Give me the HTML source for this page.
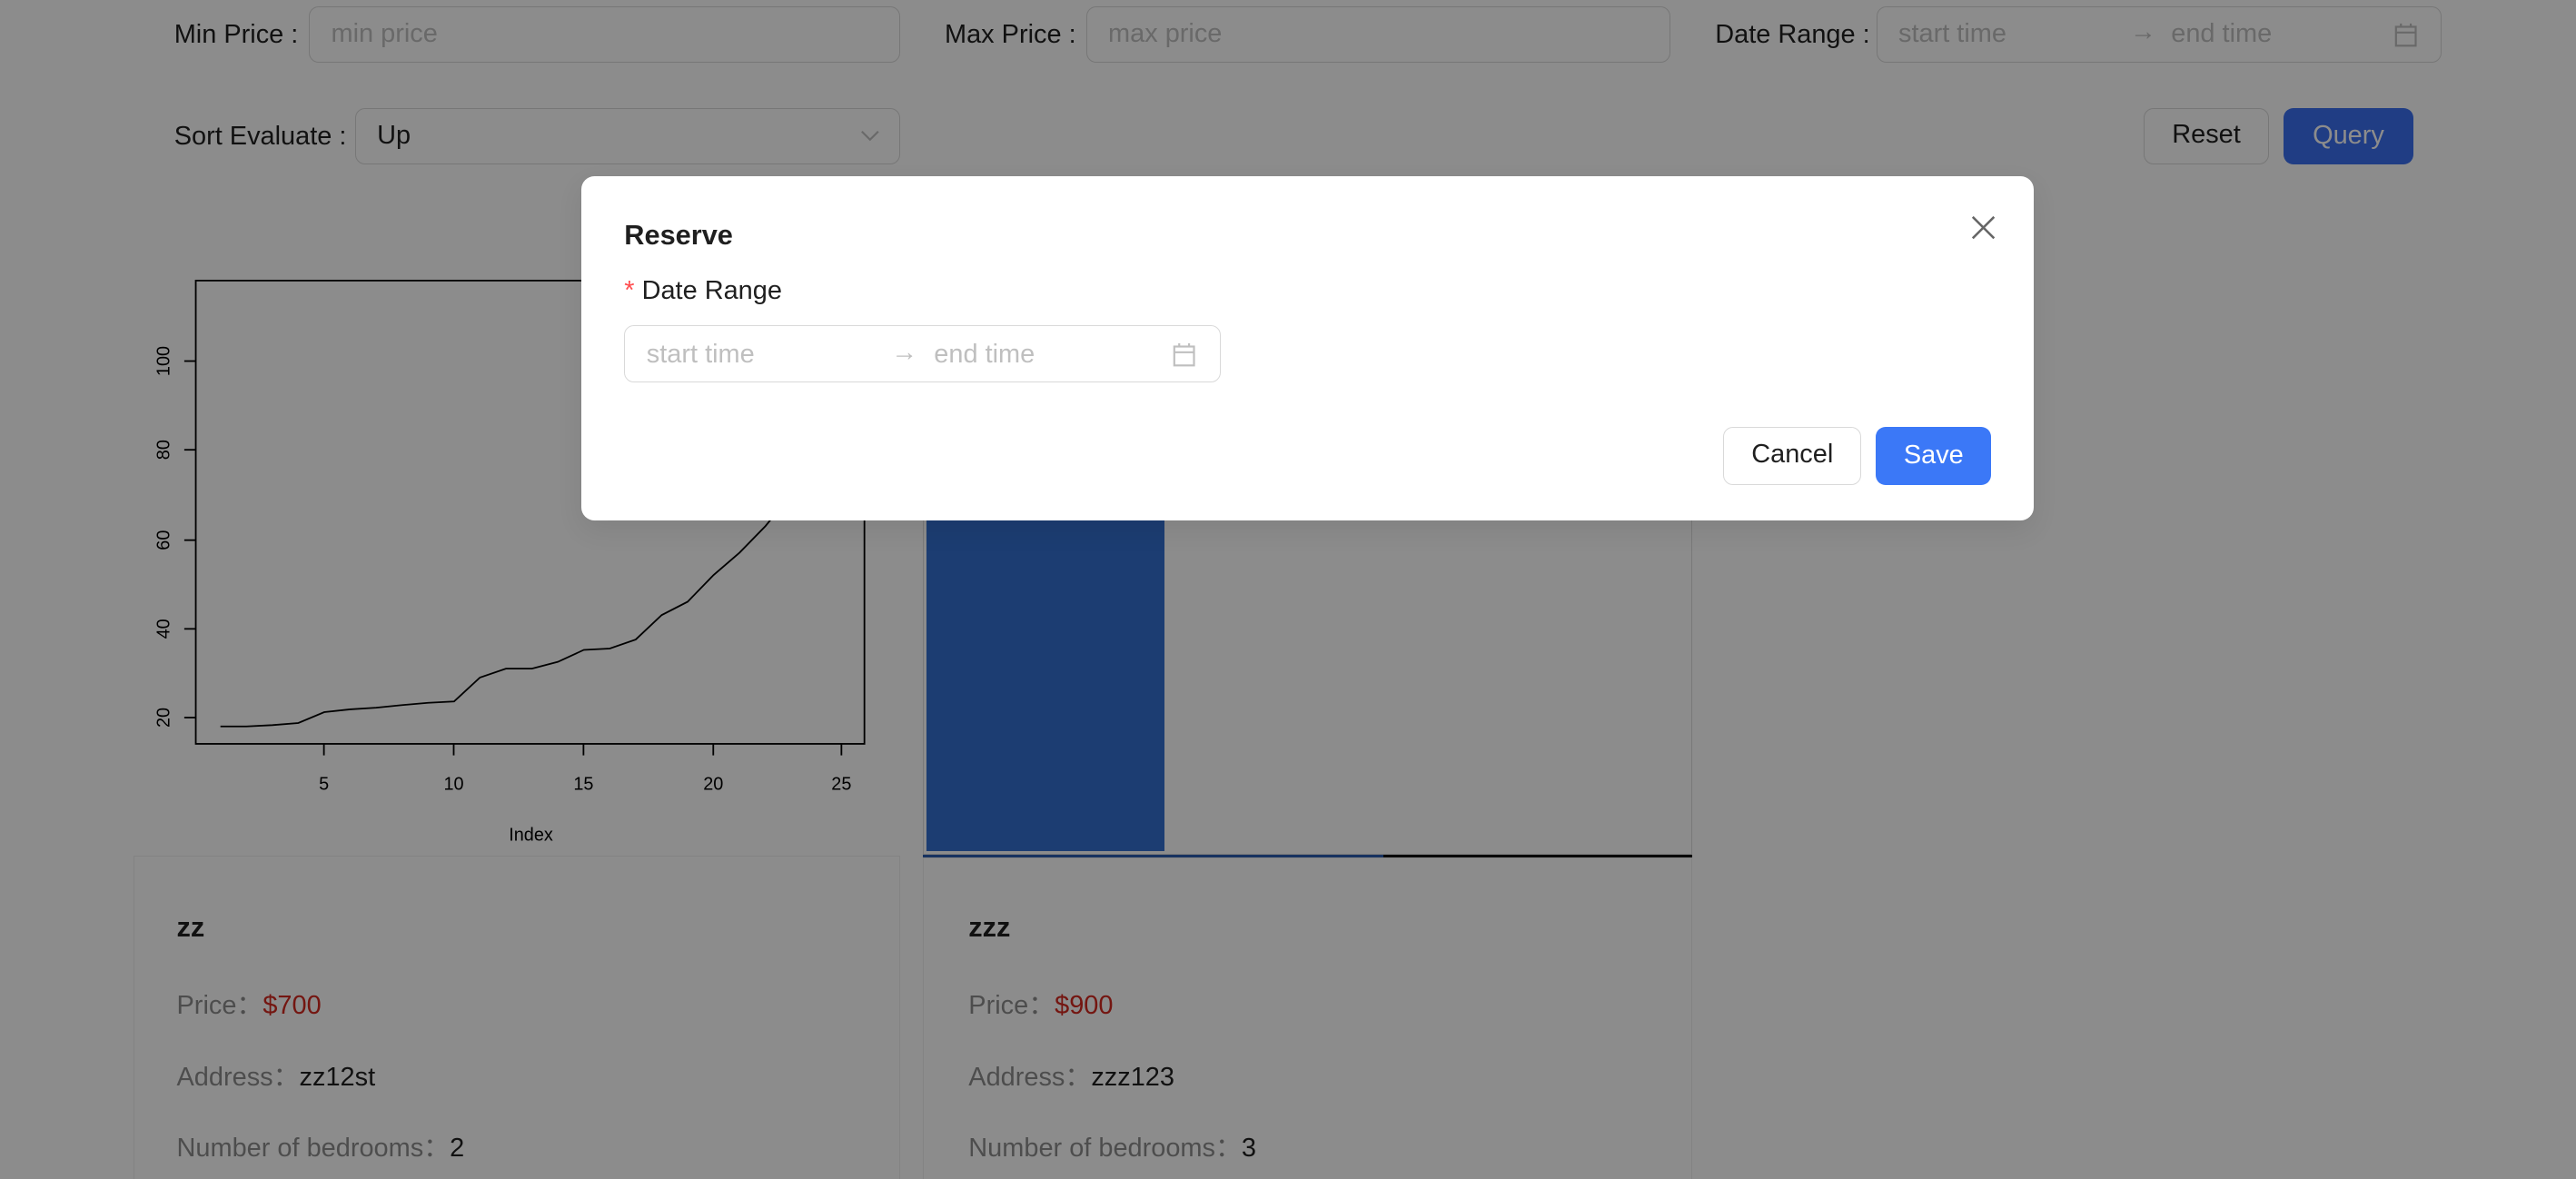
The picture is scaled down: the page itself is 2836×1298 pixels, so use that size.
<!DOCTYPE html>
<html><head><meta charset="utf-8"><style>
html,body{margin:0;padding:0;width:2836px;height:1298px;overflow:hidden;background:#fff}
#w{zoom:1.80867;width:1568px;height:718px;position:relative;font-family:"Liberation Sans",sans-serif;color:rgba(0,0,0,.88);font-size:16px}
.a{position:absolute}
.inp{position:absolute;border:1px solid #d9d9d9;border-radius:6px;box-sizing:border-box;background:#fff}
.ph{color:#bfbfbf}
.lbl{position:absolute;font-size:16px;line-height:20px}
.btn{position:absolute;border-radius:6px;box-sizing:border-box;text-align:center;font-size:16px}
.card{position:absolute;border:1px solid #eee;background:#fff;box-sizing:border-box}
.k{color:rgba(0,0,0,.45)}
#ov{position:absolute;left:0;top:0;width:1568px;height:718px;background:rgba(0,0,0,.45)}
</style></head><body><div id="w">
<div class="lbl" style="left:106px;top:11px">Min Price :</div>
<div class="inp" style="left:188px;top:4px;width:360px;height:34px"><span class="ph a" style="left:13px;top:7px">min price</span></div>
<div class="lbl" style="left:575px;top:11px">Max Price :</div>
<div class="inp" style="left:661px;top:4px;width:356px;height:34px"><span class="ph a" style="left:13px;top:7px">max price</span></div>
<div class="lbl" style="left:1044px;top:11px">Date Range :</div>
<div class="inp" style="left:1142px;top:4px;width:344px;height:34px"><span class="ph a" style="left:13px;top:7px">start time</span><span class="ph a" style="left:154px;top:6px">→</span><span class="ph a" style="left:179px;top:7px">end time</span>
<svg class="a" style="left:315px;top:9px" width="14" height="15" viewBox="0 0 14 15" fill="none" stroke="#bfbfbf" stroke-width="1.2"><rect x="1" y="2.5" width="12" height="11.5"/><line x1="1" y1="6" x2="13" y2="6"/><line x1="4" y1="0.5" x2="4" y2="3"/><line x1="10" y1="0.5" x2="10" y2="3"/></svg></div>
<div class="lbl" style="left:106px;top:73px">Sort Evaluate :</div>
<div class="inp" style="left:216px;top:66px;width:332px;height:34px"><span class="a" style="left:13px;top:7px">Up</span>
<svg class="a" style="left:307px;top:12px" width="12" height="8" viewBox="0 0 12 8" fill="none" stroke="#bfbfbf" stroke-width="1.2"><path d="M1 1.5 L6 6.5 L11 1.5"/></svg></div>
<div class="btn" style="left:1305px;top:66px;width:76px;height:34px;border:1px solid #d9d9d9;line-height:32px;background:#fff">Reset</div>
<div class="btn" style="left:1390px;top:66px;width:79px;height:34px;background:#3b6ff0;color:#fff;line-height:34px">Query</div>

<svg class="a" style="left:80px;top:160px" width="460" height="365">
<rect x="39" y="11" width="407" height="282" fill="none" stroke="#000" stroke-width="1"/>
<g stroke="#000"><line x1="117" y1="293" x2="117" y2="300"/><line x1="196" y1="293" x2="196" y2="300"/><line x1="275" y1="293" x2="275" y2="300"/><line x1="354" y1="293" x2="354" y2="300"/><line x1="432" y1="293" x2="432" y2="300"/>
<line x1="32" y1="277" x2="39" y2="277"/><line x1="32" y1="223" x2="39" y2="223"/><line x1="32" y1="169" x2="39" y2="169"/><line x1="32" y1="114" x2="39" y2="114"/><line x1="32" y1="60" x2="39" y2="60"/></g>
<g font-family="Liberation Sans" font-size="11" text-anchor="middle" fill="#000"><text x="117" y="321">5</text><text x="196" y="321">10</text><text x="275" y="321">15</text><text x="354" y="321">20</text><text x="432" y="321">25</text><text x="243" y="352">Index</text>
<text transform="translate(23,277) rotate(-90)">20</text><text transform="translate(23,223) rotate(-90)">40</text><text transform="translate(23,169) rotate(-90)">60</text><text transform="translate(23,114) rotate(-90)">80</text><text transform="translate(23,60) rotate(-90)">100</text></g>
<polyline fill="none" stroke="#000" stroke-width="1" transform="translate(-80,-160)" points="134,442.4 149.8,442.4 165.6,441.6 181.4,440.3 197.2,433.7 213,432 228.8,431 244.6,429.4 260.4,428 276.2,427.2 292,412.6 307.8,407.2 323.6,407.2 339.4,403.1 355.2,395.8 371,395 386.8,389.5 402.6,374.6 418.4,366.5 434.2,350.2 450,336.6 465.8,320.4 481.6,301 497.4,270 513,230"/>
</svg>

<div class="a" style="left:562px;top:150px;width:468px;height:370px;border:1px solid #ddd;box-sizing:border-box;background:#fff"></div>
<div class="a" style="left:564px;top:150px;width:145px;height:368px;background:#3470d0"></div>
<div class="a" style="left:562px;top:520px;width:468px;height:2px;background:#111"></div>
<div class="a" style="left:562px;top:520px;width:280px;height:2px;background:#2a5cb0"></div>

<div class="card" style="left:81px;top:521px;width:467px;height:220px">
<div class="a" style="left:26px;top:33px;font-weight:bold;font-size:17px">zz</div>
<div class="a" style="left:26px;top:77px"><span class="k">Price：</span><span style="color:#d4281f">$700</span></div>
<div class="a" style="left:26px;top:121px"><span class="k">Address：</span>zz12st</div>
<div class="a" style="left:26px;top:164px"><span class="k">Number of bedrooms：</span>2</div></div>
<div class="card" style="left:562px;top:522px;width:468px;height:220px">
<div class="a" style="left:27px;top:32px;font-weight:bold;font-size:17px">zzz</div>
<div class="a" style="left:27px;top:76px"><span class="k">Price：</span><span style="color:#d4281f">$900</span></div>
<div class="a" style="left:27px;top:120px"><span class="k">Address：</span>zzz123</div>
<div class="a" style="left:27px;top:163px"><span class="k">Number of bedrooms：</span>3</div></div>

<div id="ov"></div>

<div class="a" style="left:354px;top:107px;width:884px;height:210px;background:#fff;border-radius:8px;box-shadow:0 6px 16px rgba(0,0,0,.08)">
<div class="a" style="left:26px;top:26px;font-weight:bold;font-size:17px">Reserve</div>
<svg class="a" style="left:846px;top:24px" width="15" height="15" viewBox="0 0 15 15" stroke="#666" stroke-width="1.4"><path d="M1 1 L14 14 M14 1 L1 14"/></svg>
<div class="a" style="left:26px;top:61px"><span style="color:#ff4d4f">*</span> Date Range</div>
<div class="inp" style="left:26px;top:91px;width:363px;height:35px"><span class="ph a" style="left:13px;top:8px">start time</span><span class="ph a" style="left:162px;top:7px">→</span><span class="ph a" style="left:188px;top:8px">end time</span>
<svg class="a" style="left:333px;top:10px" width="14" height="15" viewBox="0 0 14 15" fill="none" stroke="#bfbfbf" stroke-width="1.2"><rect x="1" y="2.5" width="12" height="11.5"/><line x1="1" y1="6" x2="13" y2="6"/><line x1="4" y1="0.5" x2="4" y2="3"/><line x1="10" y1="0.5" x2="10" y2="3"/></svg></div>
<div class="btn" style="left:695px;top:153px;width:84px;height:35px;border:1px solid #d9d9d9;line-height:33px">Cancel</div>
<div class="btn" style="left:788px;top:153px;width:70px;height:35px;background:#3b78f7;color:#fff;line-height:35px">Save</div>
</div>
</div></body></html>
